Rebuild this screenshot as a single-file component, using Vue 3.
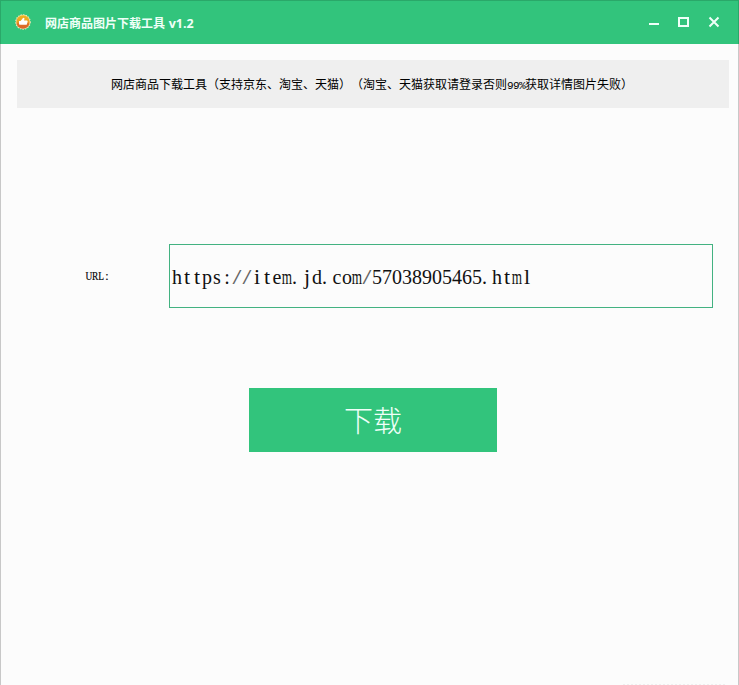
<script setup>
import { ref, computed } from 'vue'

const url = ref('https://item.jd.com/57038905465.html')

// Fixed-pitch serif: wide letters are condensed and narrow ones expanded to fit their cell.
const kindOf = (ch) => {
  if (ch === 'm') return 'wide'
  if ('URL'.includes(ch)) return 'cap'
  if ('tilj'.includes(ch)) return 'narrow'
  if (ch === '.') return 'dot'
  if (ch === '/') return 'slash'
  return 'plain'
}
const toCells = (text) => [...text].map((ch) => ({ ch, kind: kindOf(ch) }))
const urlCells = computed(() => toCells(url.value))
const labelCells = toCells('URL:')
</script>

<template>
  <main class="window">
    <header class="titlebar">
      <svg class="logo" viewBox="0 0 16 16" aria-hidden="true">
        <defs>
          <linearGradient id="badge" x1="0" y1="0" x2="0" y2="1">
            <stop offset="0" stop-color="#f0b51f" />
            <stop offset="0.5" stop-color="#eba024" />
            <stop offset="0.65" stop-color="#df7027" />
            <stop offset="1" stop-color="#d9652a" />
          </linearGradient>
        </defs>
        <circle cx="8" cy="8" r="7.2" fill="#f3e7b5" stroke="#f3e7b5" stroke-width="1.2" stroke-dasharray="1.4 1.2" />
        <circle cx="8" cy="8" r="6.7" fill="url(#badge)" />
        <path d="M4 7h1.6L8.2 3.8l1.3.5-.4 2.2h3l.6 1-1 3.3H5.8L4 10.6z" fill="#fff" />
      </svg>
      <h1 class="title">网店商品图片下载工具 <span>v1.2</span></h1>
      <nav class="controls">
        <svg viewBox="0 0 12 12"><path d="M1 8h10" /></svg>
        <svg viewBox="0 0 12 12"><path d="M1 2h9v8H1z" /></svg>
        <svg viewBox="0 0 12 12"><path d="M1.5 1.5l9 9M10.5 1.5l-9 9" /></svg>
      </nav>
    </header>
    <section class="body">
      <p class="notice">网店商品下载工具（支持京东、淘宝、天猫）（淘宝、天猫获取请登录否则<span class="half">99%</span>获取详情图片失败）</p>
      <div class="row">
        <div class="label cells"><span v-for="(c, i) in labelCells" :key="i" :class="['cell', c.kind]">{{ c.ch }}</span></div>
        <div class="field cells"><span v-for="(c, i) in urlCells" :key="i" :class="['cell', c.kind]">{{ c.ch }}</span></div>
      </div>
      <button class="download" type="button">下载</button>
    </section>
    <div class="edge"></div>
  </main>
</template>

<style>
body {
  margin: 0;
  overflow: hidden;
}
</style>

<style scoped>
.window {
  box-sizing: border-box;
  width: 739px;
  height: 685px;
  display: flex;
  flex-direction: column;
  background: #fcfcfc;
  border-left: 1px solid #c8c8c8;
  border-right: 1px solid #c8c8c8;
  font-family: "Noto Sans CJK SC", sans-serif;
}
.titlebar {
  box-sizing: border-box;
  height: 44px;
  flex: none;
  margin: 0 -1px;
  padding: 0 18px 0 15px;
  display: flex;
  align-items: center;
  background: #32c47c;
  border: 1px solid #2aa869;
  border-bottom: 0;
}
.logo {
  width: 16px;
  height: 16px;
  margin: 0 14px 1px -1px;
}
.title {
  margin: 0;
  flex: 1;
  font-size: 12px;
  line-height: 18px;
  font-weight: 700;
  color: #effff8;
  white-space: nowrap;
}
.title span {
  font-family: "Open Sans", sans-serif;
  font-size: 12.5px;
  line-height: 1;
  margin-left: 1px;
}
.controls {
  display: flex;
  gap: 18px;
  margin-bottom: 1px;
}
.controls svg {
  width: 12px;
  height: 12px;
  fill: none;
  stroke: #effff8;
  stroke-width: 2;
}
.body {
  flex: 1;
  padding: 16px 9px 0 16px;
  display: flex;
  flex-direction: column;
}
.notice {
  margin: 0;
  padding-right: 2px;
  height: 48px;
  line-height: 48px;
  background: #efefef;
  color: #000;
  font-size: 12px;
  text-align: center;
  white-space: nowrap;
  text-spacing-trim: space-all;
}
.half {
  font-family: "Liberation Mono", monospace;
  font-size: 11px;
  line-height: 1;
  letter-spacing: -0.6px;
}
.row {
  margin: 136px 16px 0 69px;
  display: flex;
  align-items: center;
}
.cells {
  display: flex;
  font-family: "Liberation Serif", serif;
}
.cell {
  flex: none;
  display: flex;
  justify-content: center;
}
.label {
  width: 83px;
  font-size: 12px;
  line-height: 16px;
  color: #000;
  -webkit-text-stroke: 0.2px #000;
}
.label .cell {
  width: 6px;
}
.field {
  box-sizing: border-box;
  flex: 1;
  height: 64px;
  padding: 1px 2px 0;
  border: 1px solid #43b281;
  align-items: center;
  font-size: 20px;
  line-height: 24px;
  color: #111;
}
.field .cell {
  width: 10px;
}
.cell.wide {
  transform: scaleX(0.66);
}
.cell.cap {
  transform: scaleX(0.78);
}
.cell.narrow {
  transform: scaleX(1.1);
}
.field .cell.dot {
  justify-content: flex-start;
}
.field .cell.slash {
  transform: scaleX(1.6);
  color: #666;
}
.download {
  width: 248px;
  height: 64px;
  margin: 80px 0 0 232px;
  padding: 0 0 2px;
  border: 0;
  background: #32c47c;
  color: #effff8;
  font: 300 29px/62px "Noto Sans CJK SC", sans-serif;
}
.edge {
  width: 104px;
  height: 1px;
  margin-left: 622px;
  background: repeating-linear-gradient(90deg, #efefef 0 2px, #fcfcfc 2px 4px);
}
</style>
